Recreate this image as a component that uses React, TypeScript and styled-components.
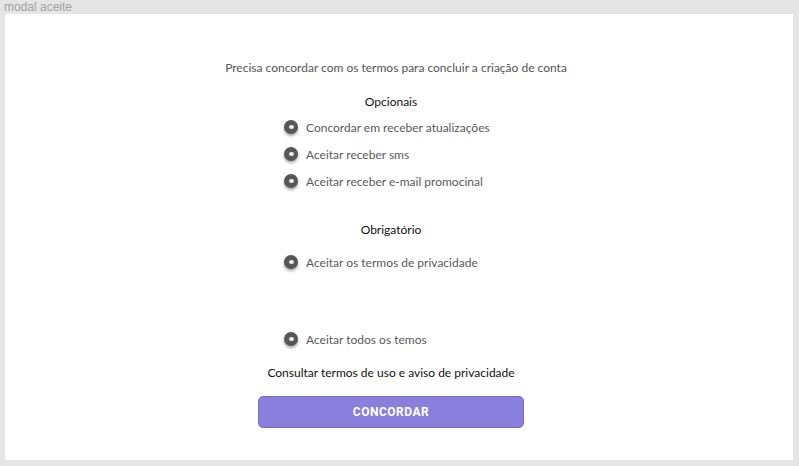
import React from "react";
import styled, { createGlobalStyle } from "styled-components";

const GlobalStyle = createGlobalStyle`
  html, body {
    margin: 0;
    padding: 0;
    background: #e5e5e5;
  }
`;

const Frame = styled.div`
  width: 799px;
  height: 466px;
  box-sizing: border-box;
  padding: 0 6px 6px 5px;
  display: flex;
  flex-direction: column;
  background: #e5e5e5;
`;

const FrameLabel = styled.div`
  height: 14px;
  line-height: 14px;
  font-family: "Liberation Sans", Arial, sans-serif;
  font-size: 12px;
  color: #a3a3a3;
  margin-left: -1px;
`;

const Panel = styled.div`
  flex: 1;
  background: #ffffff;
  display: flex;
  flex-direction: column;
  align-items: center;
  padding-top: 46px;
  font-family: "Lato", "Noto Sans", sans-serif;
`;

const Intro = styled.p`
  margin: 0 6px 0 0;
  font-size: 12px;
  line-height: 16px;
  color: #555;
`;

const Content = styled.div`
  width: 266px;
  margin-left: -16px;
  display: flex;
  flex-direction: column;
`;

const SectionTitle = styled.h4<{ $top: number }>`
  margin: ${(p) => p.$top}px 0 0 0;
  text-align: center;
  font-size: 12px;
  font-weight: 400;
  line-height: 16px;
  color: #111;
`;

const OptionList = styled.ul<{ $top: number }>`
  list-style: none;
  margin: ${(p) => p.$top}px 0 0 0;
  padding: 0 0 0 26px;
  display: flex;
  flex-direction: column;
  gap: 11px;
`;

const Option = styled.li`
  display: flex;
  align-items: center;
  gap: 8px;
  height: 16px;
  font-size: 12px;
  color: #5a5a5a;
`;

const Radio = styled.span`
  position: relative;
  width: 14px;
  height: 14px;
  border-radius: 50%;
  background: #575757;
  box-shadow: 0 2px 3px rgba(0, 0, 0, 0.35);
  flex-shrink: 0;

  &::after {
    content: "";
    position: absolute;
    left: 5px;
    top: 5px;
    width: 5px;
    height: 4px;
    border-radius: 50%;
    background: #f0f0f0;
  }
`;

const ConsultLink = styled.div`
  margin-top: 18px;
  text-align: center;
  font-size: 12px;
  line-height: 16px;
  color: #111;
`;

const AgreeButton = styled.button`
  margin-top: 15px;
  height: 32px;
  width: 266px;
  border: 1px solid #766bd0;
  border-radius: 5px;
  background: #8a7fdc;
  color: #ffffff;
  font-family: "Roboto", "Liberation Sans", sans-serif;
  font-weight: 700;
  font-size: 12px;
  letter-spacing: 0.5px;
  cursor: pointer;
`;

const optional = [
  "Concordar em receber atualizações",
  "Aceitar receber sms",
  "Aceitar receber e-mail promocinal",
];

export default function App() {
  return (
    <>
      <GlobalStyle />
      <Frame>
        <FrameLabel>modal aceite</FrameLabel>
        <Panel>
          <Intro>Precisa concordar com os termos para concluir a criação de conta</Intro>
          <Content>
            <SectionTitle $top={18}>Opcionais</SectionTitle>
            <OptionList $top={9}>
              {optional.map((t) => (
                <Option key={t}>
                  <Radio />
                  {t}
                </Option>
              ))}
            </OptionList>
            <SectionTitle $top={33}>Obrigatório</SectionTitle>
            <OptionList $top={16}>
              <Option>
                <Radio />
                Aceitar os termos de privacidade
              </Option>
            </OptionList>
            <OptionList $top={61}>
              <Option>
                <Radio />
                Aceitar todos os temos
              </Option>
            </OptionList>
            <ConsultLink>Consultar termos de uso e aviso de privacidade</ConsultLink>
            <AgreeButton>CONCORDAR</AgreeButton>
          </Content>
        </Panel>
      </Frame>
    </>
  );
}
